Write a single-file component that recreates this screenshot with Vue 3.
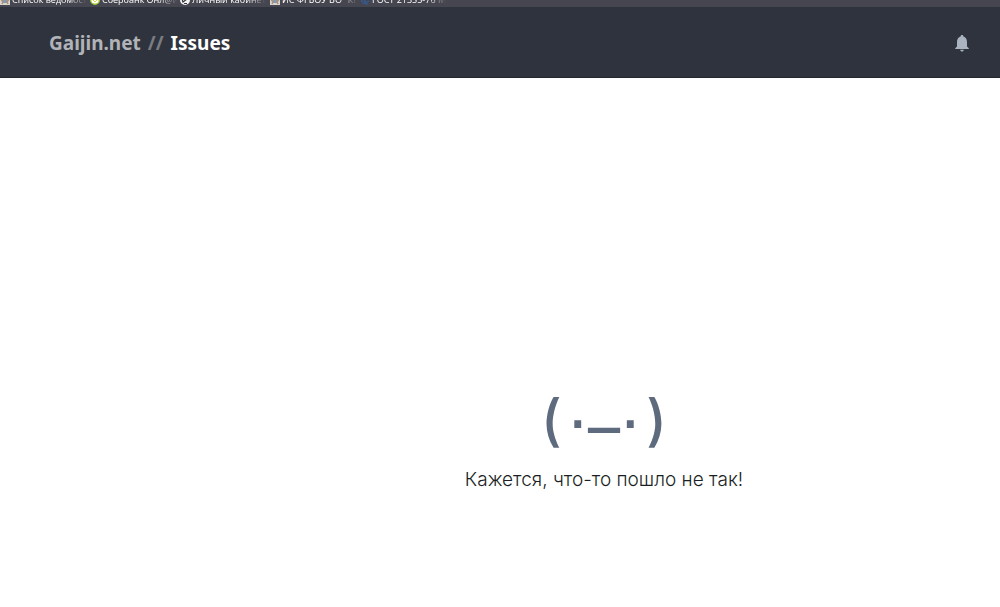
<script setup>
const bookmarks = [
  { icon: 'crest', title: 'Список ведомост' },
  { icon: 'bank', title: 'Сбербанк Онл@й' },
  { icon: 'cabinet', title: 'Личный кабинет' },
  { icon: 'crest', title: 'ИС ФГБОУ ВО "КГ' },
  { icon: 'doc', title: 'ГОСТ 21355-76 М' },
]
</script>

<template>
  <div class="page">
    <nav class="bookmarks" aria-label="Bookmarks">
      <a v-for="b in bookmarks" :key="b.title" class="bookmark" href="#">
        <svg class="favicon" viewBox="0 0 10 10" aria-hidden="true">
          <template v-if="b.icon === 'crest'">
            <rect width="10" height="10" fill="#d9d6d2" />
            <path d="M1 4L3 7L2 9M9 4L7 7L8 9" stroke="#b28a5b" stroke-width="1.5" fill="none" />
            <rect x="3" y="5" width="4" height="3" fill="#8399b4" />
          </template>
          <template v-else-if="b.icon === 'bank'">
            <circle cx="5" cy="5" r="4.300" fill="#fff" stroke="#9dcb3b" stroke-width="1.400" />
            <path d="M3 5L5 7L9 3" fill="none" stroke="#e4d635" />
          </template>
          <template v-else-if="b.icon === 'cabinet'">
            <circle cx="5" cy="5" r="5" fill="#f4f4f4" />
            <path d="M2 4L3 7L7 4M4 8.500H7" fill="none" stroke="#33343a" stroke-width="1.200" />
          </template>
          <path v-else d="M3 1C0 5 2 9 8 9M4 4C4 7 6 8 9 6" fill="none" stroke="#315e9e" stroke-width="1.200" />
        </svg>
        <span class="bookmark-title">{{ b.title }}</span>
      </a>
    </nav>

    <header class="header">
      <div class="brand">
        <a class="site" href="#">Gaijin.net</a>
        <span class="slashes">//</span>
        <a class="section" href="#">Issues</a>
      </div>
      <button class="bell" type="button" aria-label="Notifications">
        <svg viewBox="0 0 14 17" aria-hidden="true">
          <path d="M7 0C8 0 8.400 .700 8.400 1.600C10.800 2.300 12 4.300 12 7V11.500L13.800 13.300V14H.200V13.300L2 11.500V7C2 4.300 3.200 2.300 5.600 1.600C5.600 .700 6 0 7 0ZM5.200 14.800H8.800C8.700 16 8 16.600 7 16.600C6 16.600 5.300 16 5.200 14.800Z" fill="#aab4c0" />
        </svg>
      </button>
    </header>

    <main class="content">
      <div class="face" aria-label="Sad face">
        <span class="cheek">(</span>
        <span class="eyes">.<span class="mouth">_</span>.</span>
        <span class="cheek">)</span>
      </div>
      <p class="message">Кажется, что-то пошло не так!</p>
    </main>
  </div>
</template>

<style>
body {
  margin: 0;
  background: #fff;
}
</style>

<style scoped>
.page {
  min-height: 100vh;
  display: flex;
  flex-direction: column;
  font-family: Inter, "Noto Sans", sans-serif;
}
.bookmarks {
  height: 7px;
  display: flex;
  align-items: flex-end;
  overflow: hidden;
  background: #464650;
  box-sizing: border-box;
  padding-bottom: 2px;
}
.bookmark {
  width: 80px;
  margin-right: 10px;
  display: flex;
  align-items: flex-end;
  gap: 2px;
  color: #fff;
  text-decoration: none;
}
.favicon {
  width: 10px;
  height: 10px;
  flex: none;
}
.bookmark-title {
  flex: 1;
  white-space: nowrap;
  font: 500 9px/10px "Open Sans", "Noto Sans", sans-serif;
  mask-image: linear-gradient(90deg, #000 75%, transparent);
}
.header {
  height: 71px;
  box-sizing: border-box;
  display: flex;
  align-items: center;
  justify-content: space-between;
  padding: 2px 30px 0 49px;
  background: #2f333d;
  border-bottom: 1px solid #24272e;
}
.brand {
  display: flex;
  align-items: center;
  gap: 7px;
  font: 700 19px/28px "Noto Sans", sans-serif;
}
.site {
  color: #b1b3b8;
  text-decoration: none;
}
.slashes {
  color: #7b7d83;
}
.section {
  color: #fff;
  text-decoration: none;
}
.bell {
  width: 16px;
  padding: 0 1px;
  border: 0;
  background: none;
  display: flex;
}
.bell svg {
  width: 14px;
  height: 17px;
}
.content {
  flex: 1;
  display: flex;
  flex-direction: column;
  align-items: center;
  padding: 308px 0 0 208px;
}
.face {
  display: flex;
  align-items: center;
  gap: 6px;
  height: 68px;
  color: #5e6b7e;
}
.cheek {
  font: 500 56px/68px Inter, sans-serif;
}
.eyes {
  align-self: flex-start;
  font: 400 72px/35px "Liberation Sans", sans-serif;
}
.mouth {
  font-family: Roboto, sans-serif;
}
.message {
  margin: 12px 0 0;
  font-size: 19px;
  font-weight: 300;
  line-height: 28px;
  color: #1b1f25;
}
</style>
